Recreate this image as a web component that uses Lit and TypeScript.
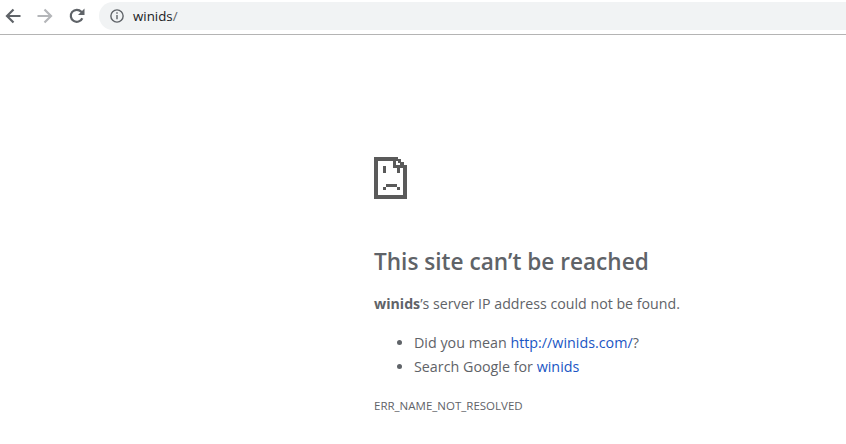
import { LitElement, css, html, svg } from 'lit';
import { customElement } from 'lit/decorators.js';

// pixel art rects of the sad tab icon: x, y, w, h
const SAD_TAB = [
  [0, 0, 24, 4],
  [0, 0, 4, 42],
  [0, 38, 33, 4],
  [29, 9, 4, 33],
  [19, 0, 3, 11],
  [19, 8, 14, 3],
  [24, 2, 3, 4],
  [26, 5, 4, 4],
  [9, 9, 3, 7],
  [23, 11, 3, 5],
  [12, 27, 11, 3],
  [9, 30, 3, 3],
  [23, 30, 3, 3],
];

@customElement('app-root')
export class AppRoot extends LitElement {
  static styles = css`
    :host {
      display: block;
      width: 846px;
      height: 444px;
      overflow: hidden;
      background: #fff;
      font-family: 'Open Sans', 'Noto Sans', sans-serif;
      color: #5f6368;
    }
    .toolbar {
      display: flex;
      height: 35px;
      box-sizing: border-box;
      padding-top: 2px;
      border-bottom: 1px solid #b4b4b4;
    }
    .nav {
      display: flex;
      align-items: center;
      height: 28px;
      width: 99px;
      flex: none;
    }
    .nav svg {
      display: block;
      width: 16px;
      height: 16px;
      flex: none;
    }
    .back {
      margin-left: 5px;
    }
    .forward {
      margin-left: 16px;
    }
    .reload {
      margin-left: 16px;
    }
    .omnibox {
      flex: 1;
      height: 28px;
      display: flex;
      align-items: center;
      gap: 9px;
      padding-left: 11px;
      background: #f1f3f4;
      border-radius: 14px 0 0 14px;
      font-size: 13.3px;
      color: #202124;
    }
    .omnibox svg {
      width: 14px;
      height: 14px;
      flex: none;
    }
    .omnibox .slash {
      color: #5f6368;
    }
    .page {
      padding: 122px 0 0 374px;
      width: 330px;
    }
    .icon {
      display: block;
      width: 33px;
      height: 42px;
    }
    h1 {
      margin: 47px 0 0;
      font-size: 22.6px;
      line-height: 32px;
      font-weight: 600;
      white-space: nowrap;
    }
    p {
      margin: 14px 0 0;
      font-size: 14.2px;
      line-height: 24px;
      white-space: nowrap;
    }
    b {
      font-weight: 700;
    }
    ul {
      margin: 15px 0 0;
      padding: 0 0 0 40px;
      font-size: 14.3px;
      line-height: 24px;
      white-space: nowrap;
    }
    a {
      color: #1a56c4;
      text-decoration: none;
    }
    .code {
      margin-top: 19px;
      font-size: 11.5px;
      line-height: 16px;
      text-transform: uppercase;
    }
  `;

  render() {
    return html`
      <div class="toolbar">
        <div class="nav">
          <svg class="back" viewBox="0 0 16 16" fill="none" stroke="#5f6368" stroke-width="2.200">
            <path d="M15.500 8H2.500M8.500 1.500 2 8 8.500 14.500" />
          </svg>
          <svg class="forward" viewBox="0 0 16 16" fill="none" stroke="#b4b6b9" stroke-width="2.200">
            <path d="M.5 8H13.500M7.500 1.500 14 8 7.500 14.500" />
          </svg>
          <svg class="reload" viewBox="0 0 16 16" fill="none">
            <path d="M13.300 10.200A6 6 0 1 1 12.300 3.800L14.300 5.800" stroke="#5f6368" stroke-width="2.200" />
            <path d="M15.500 .5v6.500h-6.500z" fill="#5f6368" />
          </svg>
        </div>
        <div class="omnibox">
          <svg viewBox="0 0 13 13" fill="none" stroke="#5f6368" stroke-width="1.300">
            <circle cx="6.500" cy="6.500" r="5.700" />
            <path d="M6.500 5.500v4M6.500 3v1.400" />
          </svg>
          <span>winids<span class="slash">/</span></span>
        </div>
      </div>
      <main class="page">
        <svg class="icon" viewBox="0 0 33 42" shape-rendering="crispEdges" fill="#5a5a5a">
          ${SAD_TAB.map(([x, y, w, h]) => svg`<rect x=${x} y=${y} width=${w} height=${h} />`)}
        </svg>
        <h1>This site can’t be reached</h1>
        <p><b>winids</b>’s server IP address could not be found.</p>
        <ul>
          <li>Did you mean <a href="#">http://winids.com/</a>?</li>
          <li>Search Google for <a href="#">winids</a></li>
        </ul>
        <div class="code">ERR_NAME_NOT_RESOLVED</div>
      </main>
    `;
  }
}
